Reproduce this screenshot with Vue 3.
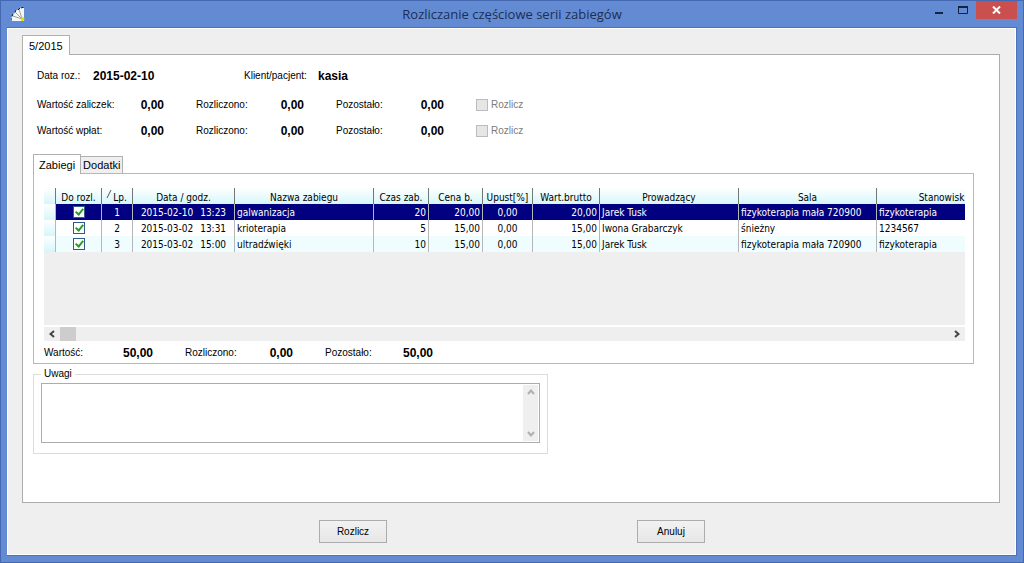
<script setup>
import { ref } from 'vue'

const summary = [
  { id: 'advance', label: 'Wartość zaliczek:', total: '0,00', settled: '0,00', left: '0,00' },
  { id: 'payment', label: 'Wartość wpłat:', total: '0,00', settled: '0,00', left: '0,00' },
]

const columns = [
  { key: 'mark', label: '', width: 12 },
  { key: 'done', label: 'Do rozl.', width: 46 },
  { key: 'no', label: 'Lp.', width: 31, sorted: true },
  { key: 'date', label: 'Data / godz.', width: 102 },
  { key: 'name', label: 'Nazwa zabiegu', width: 139 },
  { key: 'time', label: 'Czas zab.', width: 55 },
  { key: 'price', label: 'Cena b.', width: 54 },
  { key: 'discount', label: 'Upust[%]', width: 50 },
  { key: 'gross', label: 'Wart.brutto', width: 67 },
  { key: 'leader', label: 'Prowadzący', width: 139 },
  { key: 'room', label: 'Sala', width: 138 },
  { key: 'post', label: 'Stanowisk', width: 130 },
]

const rows = ref([
  { no: '1', done: true, date: '2015-02-10', hour: '13:23', name: 'galwanizacja', time: '20', price: '20,00', discount: '0,00', gross: '20,00', leader: 'Jarek Tusk', room: 'fizykoterapia mała 720900', post: 'fizykoterapia' },
  { no: '2', done: true, date: '2015-03-02', hour: '13:31', name: 'krioterapia', time: '5', price: '15,00', discount: '0,00', gross: '15,00', leader: 'Iwona Grabarczyk', room: 'śnieżny', post: '1234567' },
  { no: '3', done: true, date: '2015-03-02', hour: '15:00', name: 'ultradźwięki', time: '10', price: '15,00', discount: '0,00', gross: '15,00', leader: 'Jarek Tusk', room: 'fizykoterapia mała 720900', post: 'fizykoterapia' },
])
const selected = ref(0)
const notes = ref('')
</script>

<template>
  <div class="window">
    <header class="titlebar">
      <svg class="app-icon" width="14" height="16" viewBox="0 0 14 16" aria-hidden="true">
        <path d="M1 14 L0 11 L2 9 L2 7 L4 6 L5 3 L7 3 L9 1 L13 0 L13 14 Z" fill="#f6f6f2" />
        <path d="M11 12 L2 9 M11 12 L4 5 M11 12 L8 2" stroke="#a0a0a4" stroke-width="1" />
        <path d="M0 13 V11 M1 9 L2 7 M4 5 L5 3 M7 3 L9 1 M10 1 L13 0" stroke="#101820" stroke-width="1" fill="none" />
        <circle cx="11.500" cy="12" r="2" fill="#d8e018" />
      </svg>
      <h1>Rozliczanie częściowe serii zabiegów</h1>
      <div class="controls">
        <button type="button" class="ctl" aria-label="Minimalizuj">
          <svg width="11" height="9" viewBox="0 0 11 9"><path d="M2 6h8v2H2z" fill="#14233f" /></svg>
        </button>
        <button type="button" class="ctl" aria-label="Maksymalizuj">
          <svg width="11" height="9" viewBox="0 0 11 9"><path d="M0.500 1.500h9v6h-9z" fill="none" stroke="#14233f" /><path d="M0 1h10" stroke="#14233f" stroke-width="2" /></svg>
        </button>
        <button type="button" class="ctl close" aria-label="Zamknij">
          <svg width="9" height="8" viewBox="0 0 9 8"><path d="M1 0.500L8 7.500M8 0.500L1 7.500" stroke="#fff" stroke-width="2" /></svg>
        </button>
      </div>
    </header>

    <main class="client">
      <div class="tabs" role="tablist">
        <button type="button" role="tab" aria-selected="true" class="tab active outer">5/2015</button>
      </div>
      <section class="sheet">
        <div class="ident">
          <span class="date-label">Data roz.:</span><b class="date-value">2015-02-10</b>
          <span class="client-label">Klient/pacjent:</span><b>kasia</b>
        </div>
        <div v-for="s in summary" :key="s.id" class="sums">
          <div class="pair"><span>{{ s.label }}</span><b>{{ s.total }}</b></div>
          <div class="pair"><span>Rozliczono:</span><b>{{ s.settled }}</b></div>
          <div class="pair"><span>Pozostało:</span><b>{{ s.left }}</b></div>
          <label class="settle"><input type="checkbox" disabled />Rozlicz</label>
        </div>

        <div class="inner">
          <div class="tabs" role="tablist">
            <button type="button" role="tab" aria-selected="true" class="tab active">Zabiegi</button>
            <button type="button" role="tab" aria-selected="false" class="tab back">Dodatki</button>
          </div>
          <div class="panel">
            <div class="grid">
              <table>
                <colgroup>
                  <col v-for="c in columns" :key="c.key" :style="{ width: c.width + 'px' }" />
                </colgroup>
                <thead>
                  <tr>
                    <th v-for="c in columns" :key="c.key" :class="{ sorted: c.sorted }">
                      <svg v-if="c.sorted" class="sort" width="6" height="8" viewBox="0 0 6 8"><path d="M1 8L5 0" stroke="#555" /></svg>
                      <span>{{ c.label }}</span>
                    </th>
                  </tr>
                </thead>
                <tbody>
                  <tr v-for="(r, i) in rows" :key="r.no" :class="{ selected: i === selected }" @click="selected = i">
                    <td class="mark"></td>
                    <td class="mid"><input v-model="r.done" type="checkbox" :aria-label="'Do rozl. ' + r.no" /></td>
                    <td class="mid">{{ r.no }}</td>
                    <td class="mid"><span class="day">{{ r.date }}</span><span>{{ r.hour }}</span></td>
                    <td>{{ r.name }}</td>
                    <td class="num">{{ r.time }}</td>
                    <td class="num">{{ r.price }}</td>
                    <td class="mid">{{ r.discount }}</td>
                    <td class="num">{{ r.gross }}</td>
                    <td>{{ r.leader }}</td>
                    <td>{{ r.room }}</td>
                    <td>{{ r.post }}</td>
                  </tr>
                </tbody>
              </table>
            </div>
            <div class="hscroll">
              <button type="button" class="arrow" aria-label="W lewo">
                <svg width="6" height="8" viewBox="0 0 6 8"><path d="M5 1L1.500 4L5 7" fill="none" stroke="#444" stroke-width="2" /></svg>
              </button>
              <div class="thumb"></div>
              <button type="button" class="arrow" aria-label="W prawo">
                <svg width="6" height="8" viewBox="0 0 6 8"><path d="M1 1L4.500 4L1 7" fill="none" stroke="#444" stroke-width="2" /></svg>
              </button>
            </div>
            <div class="sums totals">
              <div class="pair"><span>Wartość:</span><b>50,00</b></div>
              <div class="pair"><span>Rozliczono:</span><b>0,00</b></div>
              <div class="pair"><span>Pozostało:</span><b>50,00</b></div>
            </div>
          </div>
        </div>

        <fieldset class="notes">
          <legend><label for="notes">Uwagi</label></legend>
          <div class="memo">
            <textarea id="notes" v-model="notes"></textarea>
            <div class="vscroll">
              <button type="button" class="arrow" aria-label="W górę">
                <svg width="8" height="6" viewBox="0 0 8 6"><path d="M1 5L4 1.500L7 5" fill="none" stroke="#b0b0b0" stroke-width="2" /></svg>
              </button>
              <button type="button" class="arrow" aria-label="W dół">
                <svg width="8" height="6" viewBox="0 0 8 6"><path d="M1 1L4 4.500L7 1" fill="none" stroke="#b0b0b0" stroke-width="2" /></svg>
              </button>
            </div>
          </div>
        </fieldset>
      </section>
      <footer class="actions">
        <button type="button" class="push">Rozlicz</button>
        <button type="button" class="push">Anuluj</button>
      </footer>
    </main>
  </div>
</template>

<style>
body {
  margin: 0;
}
</style>

<style scoped>
* {
  box-sizing: border-box;
}
button,
textarea,
input {
  font: inherit;
  color: inherit;
  margin: 0;
  padding: 0;
}
svg {
  display: block;
}
.window {
  display: flex;
  flex-direction: column;
  min-height: 100vh;
  padding: 0 6px 6px;
  border: 1px solid #4569b0;
  background: #628bd3;
  font: 10px/14px "Liberation Sans", Arial, sans-serif;
  color: #000;
}
.titlebar {
  display: grid;
  grid-template-columns: 120px 1fr 120px;
  height: 26px;
}
.app-icon {
  margin: 6px 0 0 4px;
}
h1 {
  margin: 0;
  font: 13px/27px "Open Sans", "Noto Sans", sans-serif;
  text-align: center;
  color: #1c2f55;
}
.controls {
  display: flex;
  justify-content: flex-end;
}
.ctl {
  display: flex;
  align-items: center;
  justify-content: center;
  width: 25px;
  height: 18px;
  border: 0;
  background: none;
}
.ctl.close {
  width: 41px;
  background: #c9504f;
}
.client {
  flex: 1;
  display: flex;
  flex-direction: column;
  padding: 7px 16px 0 15px;
  border: 1px solid #4d72b8;
  border-width: 1px 1px 1px 0;
  background: #efefef;
  box-shadow: inset 0 0 0 1px #fff;
}
.tabs {
  display: flex;
  align-items: flex-end;
}
.tab {
  height: 17px;
  padding: 0 4px;
  border: 1px solid #b0b0b0;
  border-bottom: 0;
  background: #efefef;
  font: 11px/16px "Liberation Sans", Arial, sans-serif;
}
.tab.active {
  position: relative;
  height: 20px;
  margin-bottom: -1px;
  padding: 0 5px;
  background: #fff;
}
.tab.outer {
  padding: 0 6px;
}
.tab.back {
  padding: 0 2px;
  border-left: 0;
}
.sheet {
  flex: 1;
  padding: 14px 25px 20px 10px;
  border: 1px solid #acacac;
  background: #fff;
}
.ident {
  display: flex;
  padding-left: 4px;
}
.ident span {
  flex: none;
}
.date-label {
  width: 56px;
}
.date-value {
  width: 151px;
}
.client-label {
  width: 74px;
}
b {
  font: bold 12px/14px "Liberation Sans", Arial, sans-serif;
}
.sums {
  display: flex;
  gap: 32px;
  margin-top: 12px;
  padding-left: 4px;
}
.ident + .sums {
  margin-top: 15px;
}
.pair {
  display: flex;
  justify-content: space-between;
  width: 108px;
}
.pair:first-child {
  width: 127px;
}
.settle {
  display: flex;
  align-items: center;
  gap: 3px;
  color: #7c7c7c;
}
.settle input {
  appearance: none;
  width: 12px;
  height: 12px;
  border: 1px solid #bcbcbc;
  background: #e6e6e6;
}
.inner {
  margin-top: 16px;
}
.panel {
  padding: 14px 8px 3px 10px;
  border: 1px solid #b8b8b8;
}
.grid {
  height: 137px;
  overflow: hidden;
  background: #efefef;
}
table {
  width: 963px;
  table-layout: fixed;
  border-collapse: separate;
  border-spacing: 0;
  font: 10px/15px "DejaVu Sans Condensed", "DejaVu Sans", sans-serif;
}
th,
td {
  height: 16px;
  padding: 0 2px;
  border-right: 1px solid #b4b8b8;
  overflow: hidden;
  white-space: nowrap;
  text-align: left;
  font-weight: normal;
}
th {
  border-right-color: #707878;
  background: linear-gradient(#fff, #d6f6fb);
  text-align: center;
}
th span {
  display: block;
  height: 14px;
  margin-top: 2px;
  overflow: hidden;
}
th.sorted {
  position: relative;
  padding-left: 8px;
}
.sort {
  position: absolute;
  top: 2px;
  left: 4px;
}
td {
  background: #fff;
}
tbody tr:nth-child(odd) td {
  background: #f0fdff;
}
td.mark,
tbody tr:nth-child(odd) td.mark {
  background: linear-gradient(#fff, #d6f6fb);
}
tbody tr.selected td:not(.mark) {
  background: #000080;
  color: #fff;
}
.mid {
  text-align: center;
}
.num {
  text-align: right;
}
.day {
  margin-right: 7px;
}
td input {
  appearance: none;
  display: block;
  width: 12px;
  height: 12px;
  margin: 0 auto;
  border: 1px solid #35588a;
  background: #fff;
}
td input:checked::after {
  content: "";
  display: block;
  width: 3px;
  height: 6px;
  margin: 0 3px;
  border: solid #21a121;
  border-width: 0 2px 2px 0;
  transform: rotate(40deg);
}
.hscroll {
  display: flex;
  align-items: center;
  height: 14px;
  margin-top: 2px;
  background: #efefef;
}
.arrow {
  display: flex;
  align-items: center;
  justify-content: center;
  width: 16px;
  height: 14px;
  border: 0;
  background: none;
}
.thumb {
  width: 16px;
  height: 14px;
  margin-right: auto;
  background: #cdcdcd;
}
.totals {
  margin-top: 5px;
  padding-left: 0;
}
.totals .pair:first-child {
  width: 109px;
}
.notes {
  max-width: 515px;
  margin: 3px 0 0;
  padding: 2px 7px 10px;
  border: 1px solid #dcdcdc;
}
legend {
  padding: 0 3px;
}
.memo {
  display: flex;
  height: 60px;
  padding: 1px;
  border: 1px solid #acacac;
}
textarea {
  flex: 1;
  border: 0;
  outline: 0;
  resize: none;
  background: #fff;
}
.vscroll {
  display: flex;
  flex-direction: column;
  justify-content: space-between;
  width: 15px;
  background: #efefef;
}
.actions {
  display: flex;
  justify-content: center;
  gap: 250px;
  padding: 17px 0 12px 2px;
}
.push {
  width: 68px;
  height: 23px;
  border: 1px solid #acacac;
  background: linear-gradient(#f2f2f2, #e6e6e6);
}
</style>
